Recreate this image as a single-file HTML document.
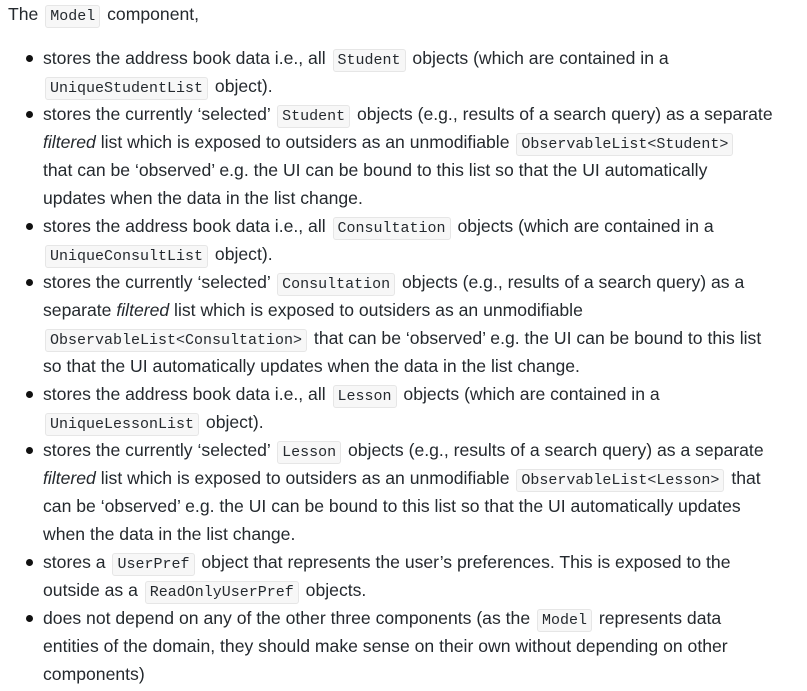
<!DOCTYPE html>
<html><head><style>
body{margin:0;background:#fff;color:#24292e;font-family:"Liberation Sans",sans-serif;font-size:17.6px;width:807px;height:691px;overflow:hidden}
p{margin:0;position:absolute;left:8px;top:0;line-height:28px;white-space:nowrap}
ul{position:absolute;left:0;top:44px;margin:0;padding:0 0 0 43px;list-style:none}
li{position:relative;line-height:28px;height:auto;white-space:nowrap}
li:before{content:"";position:absolute;left:-17px;top:11px;width:7px;height:7px;border-radius:50%;background:#111}
code{font-family:"Liberation Mono",monospace;font-size:15px;line-height:1;background:#f7f7f7;border:1px solid #e6e6e6;border-radius:3px;padding:2px 4px;margin:0 2px}
</style></head><body>
<p>The <code>Model</code> component,</p>
<ul>
<li>stores the address book data i.e., all <code>Student</code> objects (which are contained in a<br><code>UniqueStudentList</code> object).</li>
<li>stores the currently ‘selected’ <code>Student</code> objects (e.g., results of a search query) as a separate<br><i>filtered</i> list which is exposed to outsiders as an unmodifiable <code>ObservableList&lt;Student&gt;</code><br>that can be ‘observed’ e.g. the UI can be bound to this list so that the UI automatically<br>updates when the data in the list change.</li>
<li>stores the address book data i.e., all <code>Consultation</code> objects (which are contained in a<br><code>UniqueConsultList</code> object).</li>
<li>stores the currently ‘selected’ <code>Consultation</code> objects (e.g., results of a search query) as a<br>separate <i>filtered</i> list which is exposed to outsiders as an unmodifiable<br><code>ObservableList&lt;Consultation&gt;</code> that can be ‘observed’ e.g. the UI can be bound to this list<br>so that the UI automatically updates when the data in the list change.</li>
<li>stores the address book data i.e., all <code>Lesson</code> objects (which are contained in a<br><code>UniqueLessonList</code> object).</li>
<li>stores the currently ‘selected’ <code>Lesson</code> objects (e.g., results of a search query) as a separate<br><i>filtered</i> list which is exposed to outsiders as an unmodifiable <code>ObservableList&lt;Lesson&gt;</code> that<br>can be ‘observed’ e.g. the UI can be bound to this list so that the UI automatically updates<br>when the data in the list change.</li>
<li>stores a <code>UserPref</code> object that represents the user’s preferences. This is exposed to the<br>outside as a <code>ReadOnlyUserPref</code> objects.</li>
<li>does not depend on any of the other three components (as the <code>Model</code> represents data<br>entities of the domain, they should make sense on their own without depending on other<br>components)</li>
</ul>
</body></html>
